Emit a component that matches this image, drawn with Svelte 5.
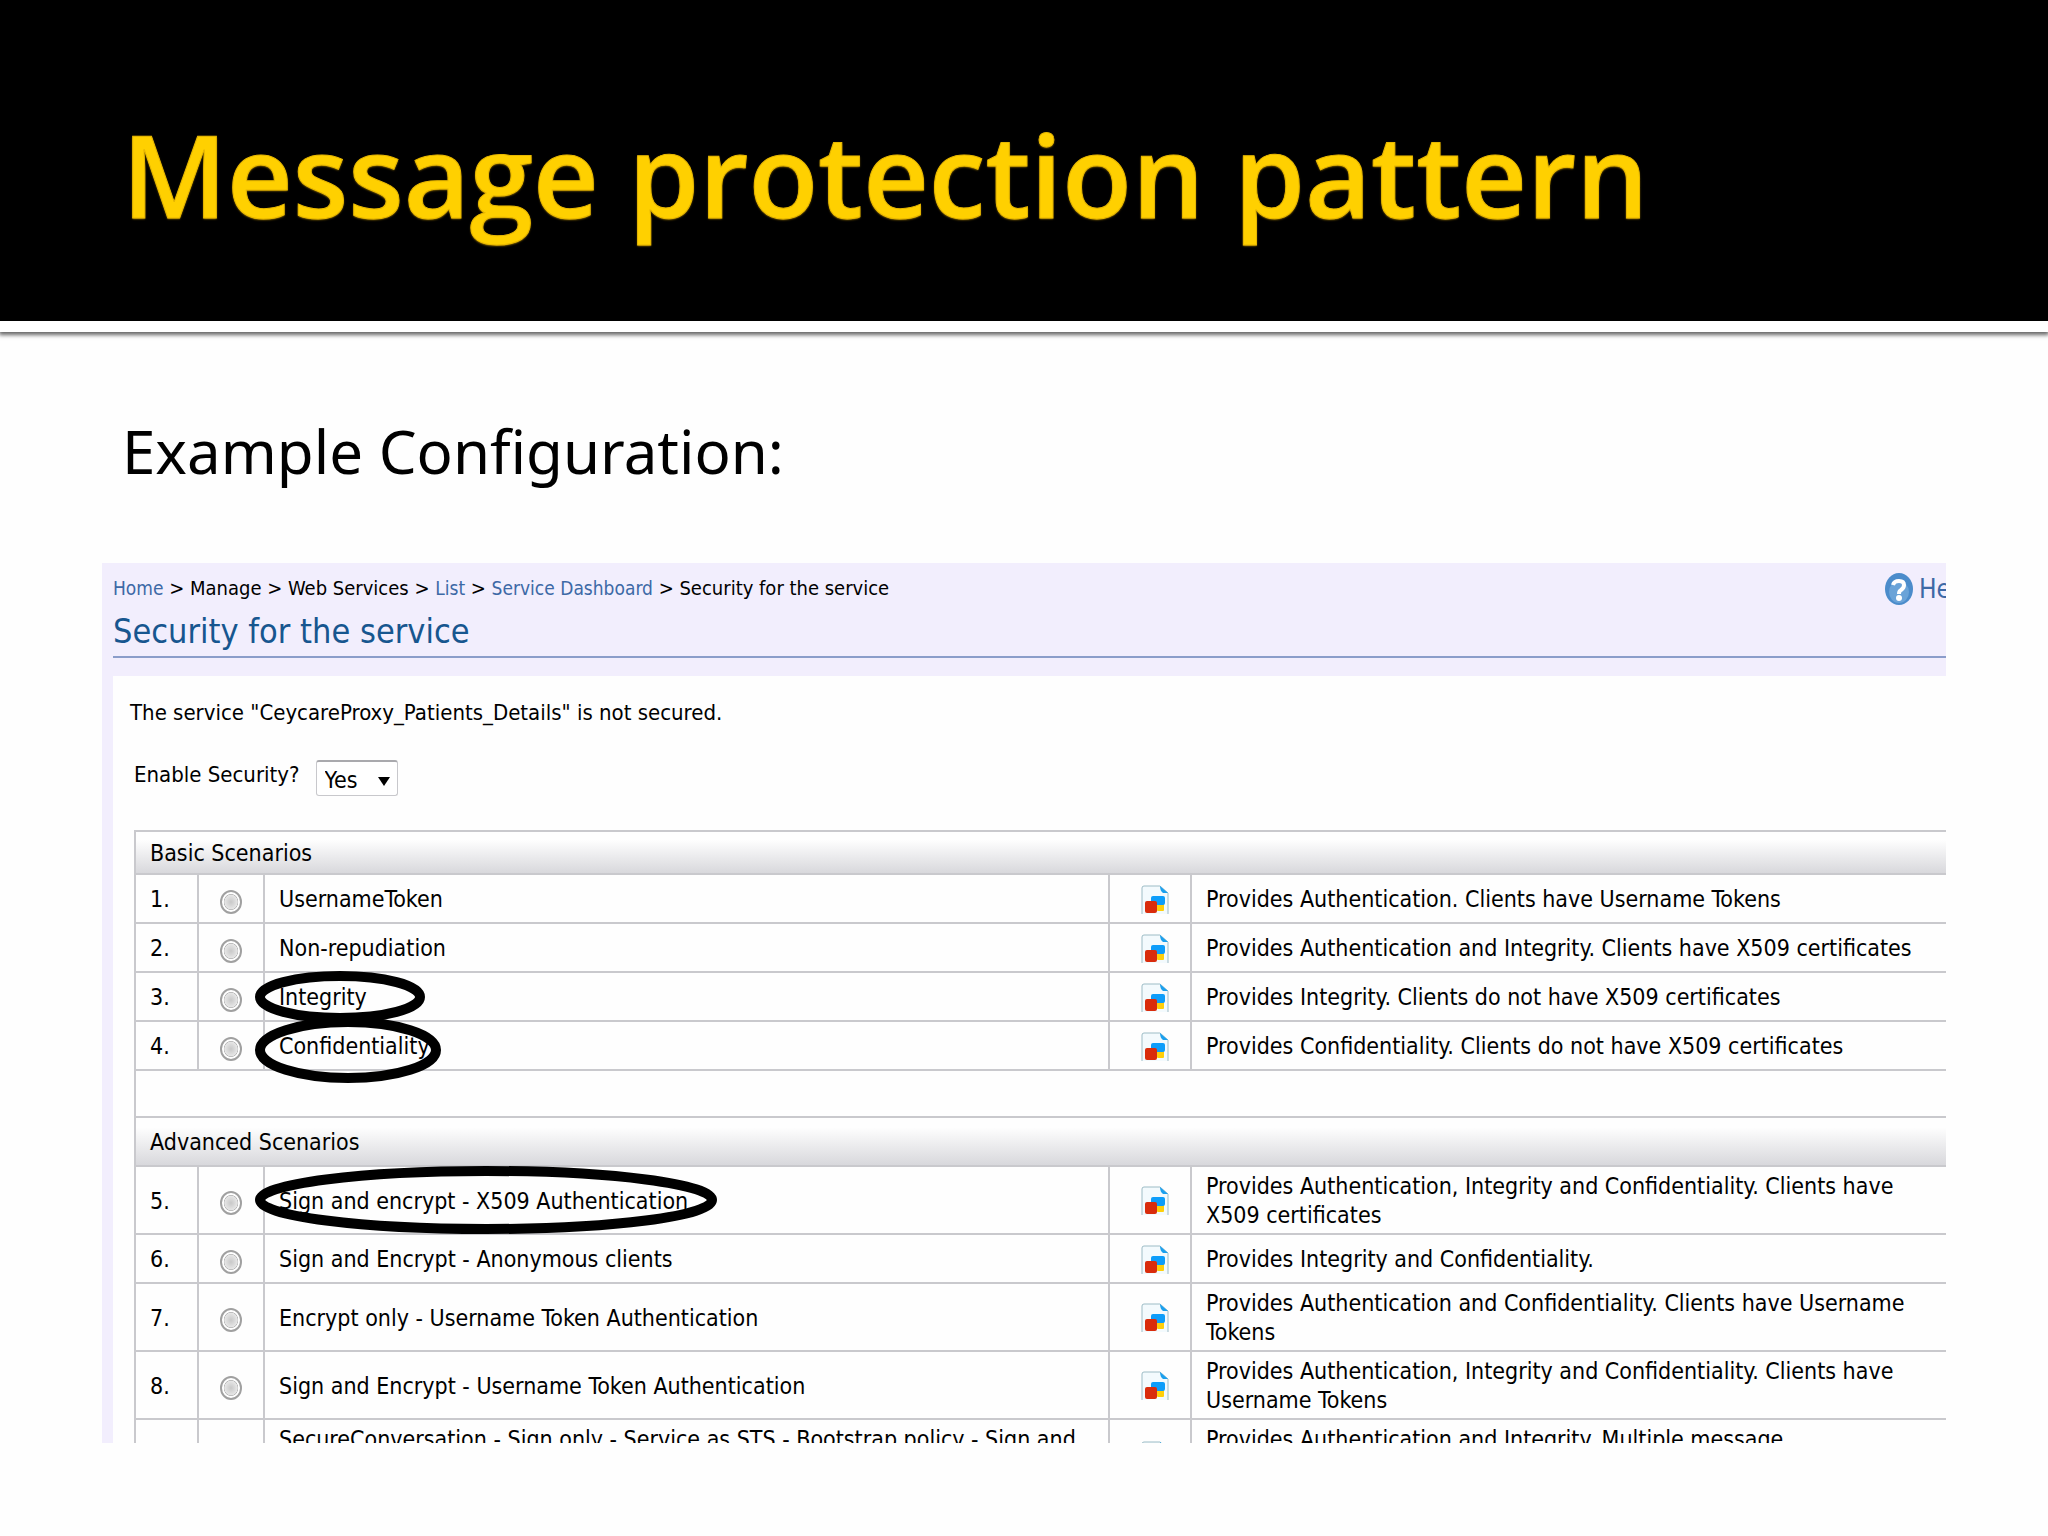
<!--
  Slide: heading band, subtitle and a cropped view of the
  "Security for the service" admin page with circled scenarios.
-->
<script lang="ts">
	interface Scenario {
		id: number;
		name: string;
		description: string;
		// Size and vertical shift of the hand-drawn oval around the name
		oval?: { width: number; height: number; shift: number };
	}

	const basic: Scenario[] = [
		{ id: 1, name: 'UsernameToken', description: 'Provides Authentication. Clients have Username Tokens' },
		{
			id: 2,
			name: 'Non-repudiation',
			description: 'Provides Authentication and Integrity. Clients have X509 certificates'
		},
		{
			id: 3,
			name: 'Integrity',
			description: 'Provides Integrity. Clients do not have X509 certificates',
			oval: { width: 170, height: 52, shift: 0 }
		},
		{
			id: 4,
			name: 'Confidentiality',
			description: 'Provides Confidentiality. Clients do not have X509 certificates',
			oval: { width: 186, height: 66, shift: 4 }
		}
	];

	const advanced: Scenario[] = [
		{
			id: 5,
			name: 'Sign and encrypt - X509 Authentication',
			description: 'Provides Authentication, Integrity and Confidentiality. Clients have X509 certificates',
			oval: { width: 462, height: 68, shift: 0 }
		},
		{ id: 6, name: 'Sign and Encrypt - Anonymous clients', description: 'Provides Integrity and Confidentiality.' },
		{
			id: 7,
			name: 'Encrypt only - Username Token Authentication',
			description: 'Provides Authentication and Confidentiality. Clients have Username Tokens'
		},
		{
			id: 8,
			name: 'Sign and Encrypt - Username Token Authentication',
			description: 'Provides Authentication, Integrity and Confidentiality. Clients have Username Tokens'
		},
		{
			id: 9,
			name: 'SecureConversation - Sign only - Service as STS - Bootstrap policy - Sign and',
			description: 'Provides Authentication and Integrity. Multiple message'
		}
	];

	let enabled = $state('Yes');
	let selected = $state(0);
</script>

{#snippet row(item: Scenario)}
	<tr class:tall={item.id === 9}>
		<td>{item.id}.</td>
		<td class="pick">
			<input type="radio" name="scenario" value={item.id} bind:group={selected} aria-label={item.name} />
		</td>
		<td class="name">
			{item.name}
			{#if item.oval}
				<svg
					class="oval"
					style="width: {item.oval.width}px; height: {item.oval.height}px; margin-top: {item.oval.shift}px"
					aria-hidden="true"
				>
					<ellipse
						cx={item.oval.width / 2}
						cy={item.oval.height / 2}
						rx={item.oval.width / 2 - 5}
						ry={item.oval.height / 2 - 5}
					/>
				</svg>
			{/if}
		</td>
		<td class="doc">
			<svg viewBox="0 0 28 30" width="28" height="30" aria-hidden="true">
				<path d="M1 29V3Q1 1 3 1H19L27 8V29" fill="#f3fafd" stroke="#9dbcc6" />
				<path d="M19 1L27 8H22Q19 6 19 1Z" fill="#1ba0ee" />
				<rect x="16" y="18" width="7" height="8" rx="1" fill="#ffcf0a" />
				<rect x="10" y="11" width="14" height="9" rx="2" fill="#0d9dfa" />
				<rect x="4" y="16" width="12" height="12" rx="2" fill="#d92c0c" />
			</svg>
		</td>
		<td>{item.description}</td>
	</tr>
{/snippet}

<div class="slide">
	<header class="band">
		<h1>Message protection pattern</h1>
	</header>

	<main class="content">
		<p class="subtitle">Example Configuration:</p>

		<section class="panel">
			<div class="top">
				<nav class="crumbs">
					<a href="#home">Home</a> &gt; Manage &gt; Web Services &gt; <a href="#list">List</a> &gt;
					<a href="#dashboard">Service Dashboard</a> &gt; Security for the service
				</nav>
				<a class="help" href="#help">
					<svg viewBox="0 0 28 32" width="28" height="32" aria-hidden="true">
						<ellipse cx="14" cy="16" rx="14" ry="16" fill="#4b8ccb" />
						<ellipse cx="14" cy="19" rx="10" ry="11" fill="#6aa3d8" />
						<path
							d="M8 12Q9 8 14 8T19 12Q19 15 16 17Q14 18 14 21"
							fill="none"
							stroke="#fff"
							stroke-width="4"
						/>
						<circle cx="14" cy="25" r="3" fill="#fff" />
					</svg>
					<span>Help</span>
				</a>
			</div>
			<h2>Security for the service</h2>

			<div class="sheet">
				<p class="status">The service "CeycareProxy_Patients_Details" is not secured.</p>
				<div class="enable">
					<label for="enable-security">Enable Security?</label>
					<span class="dropdown">
						<select id="enable-security" bind:value={enabled}>
							<option>Yes</option>
							<option>No</option>
						</select>
						<svg class="arrow" viewBox="0 0 12 9" width="12" height="9" aria-hidden="true">
							<path d="M0 0H12L6 9Z" />
						</svg>
					</span>
				</div>

				<table>
					<colgroup>
						<col class="col-id" />
						<col class="col-pick" />
						<col />
						<col class="col-doc" />
						<col class="col-about" />
					</colgroup>
					<tbody>
						<tr class="first"><th colspan="5">Basic Scenarios</th></tr>
						{#each basic as item (item.id)}
							{@render row(item)}
						{/each}
						<tr class="blank"><td colspan="5"></td></tr>
						<tr><th colspan="5">Advanced Scenarios</th></tr>
						{#each advanced as item (item.id)}
							{@render row(item)}
						{/each}
					</tbody>
				</table>
			</div>
		</section>
	</main>
</div>

<style>
	:global(body) {
		background: #fefefe;
	}

	.slide {
		display: flex;
		flex-direction: column;
		height: 100vh;
		box-sizing: border-box;
		padding-bottom: 93px;
		overflow: hidden;
		color: #000;
		font-family: 'DejaVu Sans Condensed', 'DejaVu Sans', sans-serif;
		font-size: 23px;
		line-height: 29px;
	}

	.band {
		flex: none;
		background: #000;
		border-bottom: 11px solid #fff;
		box-shadow: 0 2px 4px 1px #666;
		padding: 99px 122px 72px;
	}

	h1 {
		margin: 0;
		color: #ffd000;
		font-family: 'Open Sans', 'Noto Sans', sans-serif;
		font-size: 114px;
		font-weight: 600;
		line-height: 150px;
		-webkit-text-stroke: 1px #e8b800;
		text-shadow: 0 1px 2px #b58900;
	}

	.content {
		flex: 1;
		min-height: 0;
		display: flex;
		flex-direction: column;
		padding: 0 102px;
	}

	.subtitle {
		margin: 79px 0 72px;
		padding-left: 20px;
		font-family: 'Noto Sans', 'Open Sans', sans-serif;
		font-size: 60px;
		line-height: 80px;
	}

	.panel {
		flex: 1;
		min-height: 0;
		overflow: hidden;
		background: #f2eefd;
		padding: 10px 0 0 11px;
	}

	.top {
		display: flex;
		justify-content: space-between;
		height: 36px;
	}

	.crumbs {
		font-size: 20px;
		line-height: 30px;
	}

	a {
		color: #3d69a6;
		text-decoration: none;
	}

	.crumbs a {
		font-size: 19px;
	}

	.help {
		display: flex;
		flex: none;
		gap: 6px;
		width: 61px;
		overflow: hidden;
		font-size: 26px;
		line-height: 32px;
	}

	.help svg {
		flex: none;
	}

	h2 {
		margin: 0 0 18px;
		padding-bottom: 3px;
		border-bottom: 2px solid #8b9dca;
		color: #17568f;
		font-size: 34px;
		font-weight: 400;
		line-height: 44px;
	}

	.sheet {
		background: #fefefe;
		padding: 22px 0 0 21px;
	}

	.status {
		margin: 0 0 0 -4px;
		font-size: 22px;
	}

	.enable {
		display: flex;
		align-items: flex-start;
		gap: 16px;
		margin: 33px 0 34px;
		font-size: 22px;
		line-height: 30px;
	}

	select {
		appearance: none;
		display: block;
		width: 82px;
		height: 36px;
		padding: 2px 8px 0;
		border: 1px solid #c8c8cc;
		border-top: 2px solid #a9a9ad;
		border-radius: 3px;
		background: #fff;
		color: #000;
		font-family: 'DejaVu Sans Condensed', 'DejaVu Sans', sans-serif;
		font-size: 23px;
	}

	.dropdown {
		position: relative;
	}

	.arrow {
		position: absolute;
		right: 8px;
		top: 17px;
		pointer-events: none;
	}

	table {
		width: 100%;
		table-layout: fixed;
		border-collapse: collapse;
		border-left: 2px solid #c9c9cd;
		border-top: 2px solid #c9c9cd;
	}

	.col-id {
		width: 63px;
	}

	.col-pick {
		width: 66px;
	}

	.col-doc {
		width: 82px;
	}

	.col-about {
		width: 755px;
	}

	td,
	th {
		height: 49px;
		box-sizing: border-box;
		padding: 5px 14px 3px;
		border: 2px solid #c9c9cd;
		border-right: 0;
		text-align: left;
		vertical-align: middle;
		font-weight: 400;
	}

	th {
		background: linear-gradient(#fefefe 20%, #d8d8dc);
	}

	.first th {
		height: 43px;
	}

	.blank td {
		height: 47px;
	}

	.tall td {
		height: 72px;
	}

	.tall .name,
	.tall .name ~ td:last-child {
		vertical-align: top;
	}

	.name {
		position: relative;
	}

	.pick input {
		appearance: none;
		display: block;
		box-sizing: border-box;
		width: 22px;
		height: 24px;
		margin: 4px auto 0;
		border: 2px solid #a0a0a0;
		border-radius: 50%;
		background: radial-gradient(closest-side, #c8c8c8, #e6e6e6 70%, #b8b8b8 76%, #fff 84%);
	}

	.pick input:checked {
		background: radial-gradient(#333 35%, #eee 45%);
	}

	.doc svg {
		display: block;
		margin-left: 17px;
	}

	.oval {
		position: absolute;
		left: -10px;
		top: 50%;
		transform: translateY(-50%);
		z-index: 1;
		overflow: visible;
		pointer-events: none;
	}

	.oval ellipse {
		fill: none;
		stroke: #000;
		stroke-width: 10px;
	}
</style>
